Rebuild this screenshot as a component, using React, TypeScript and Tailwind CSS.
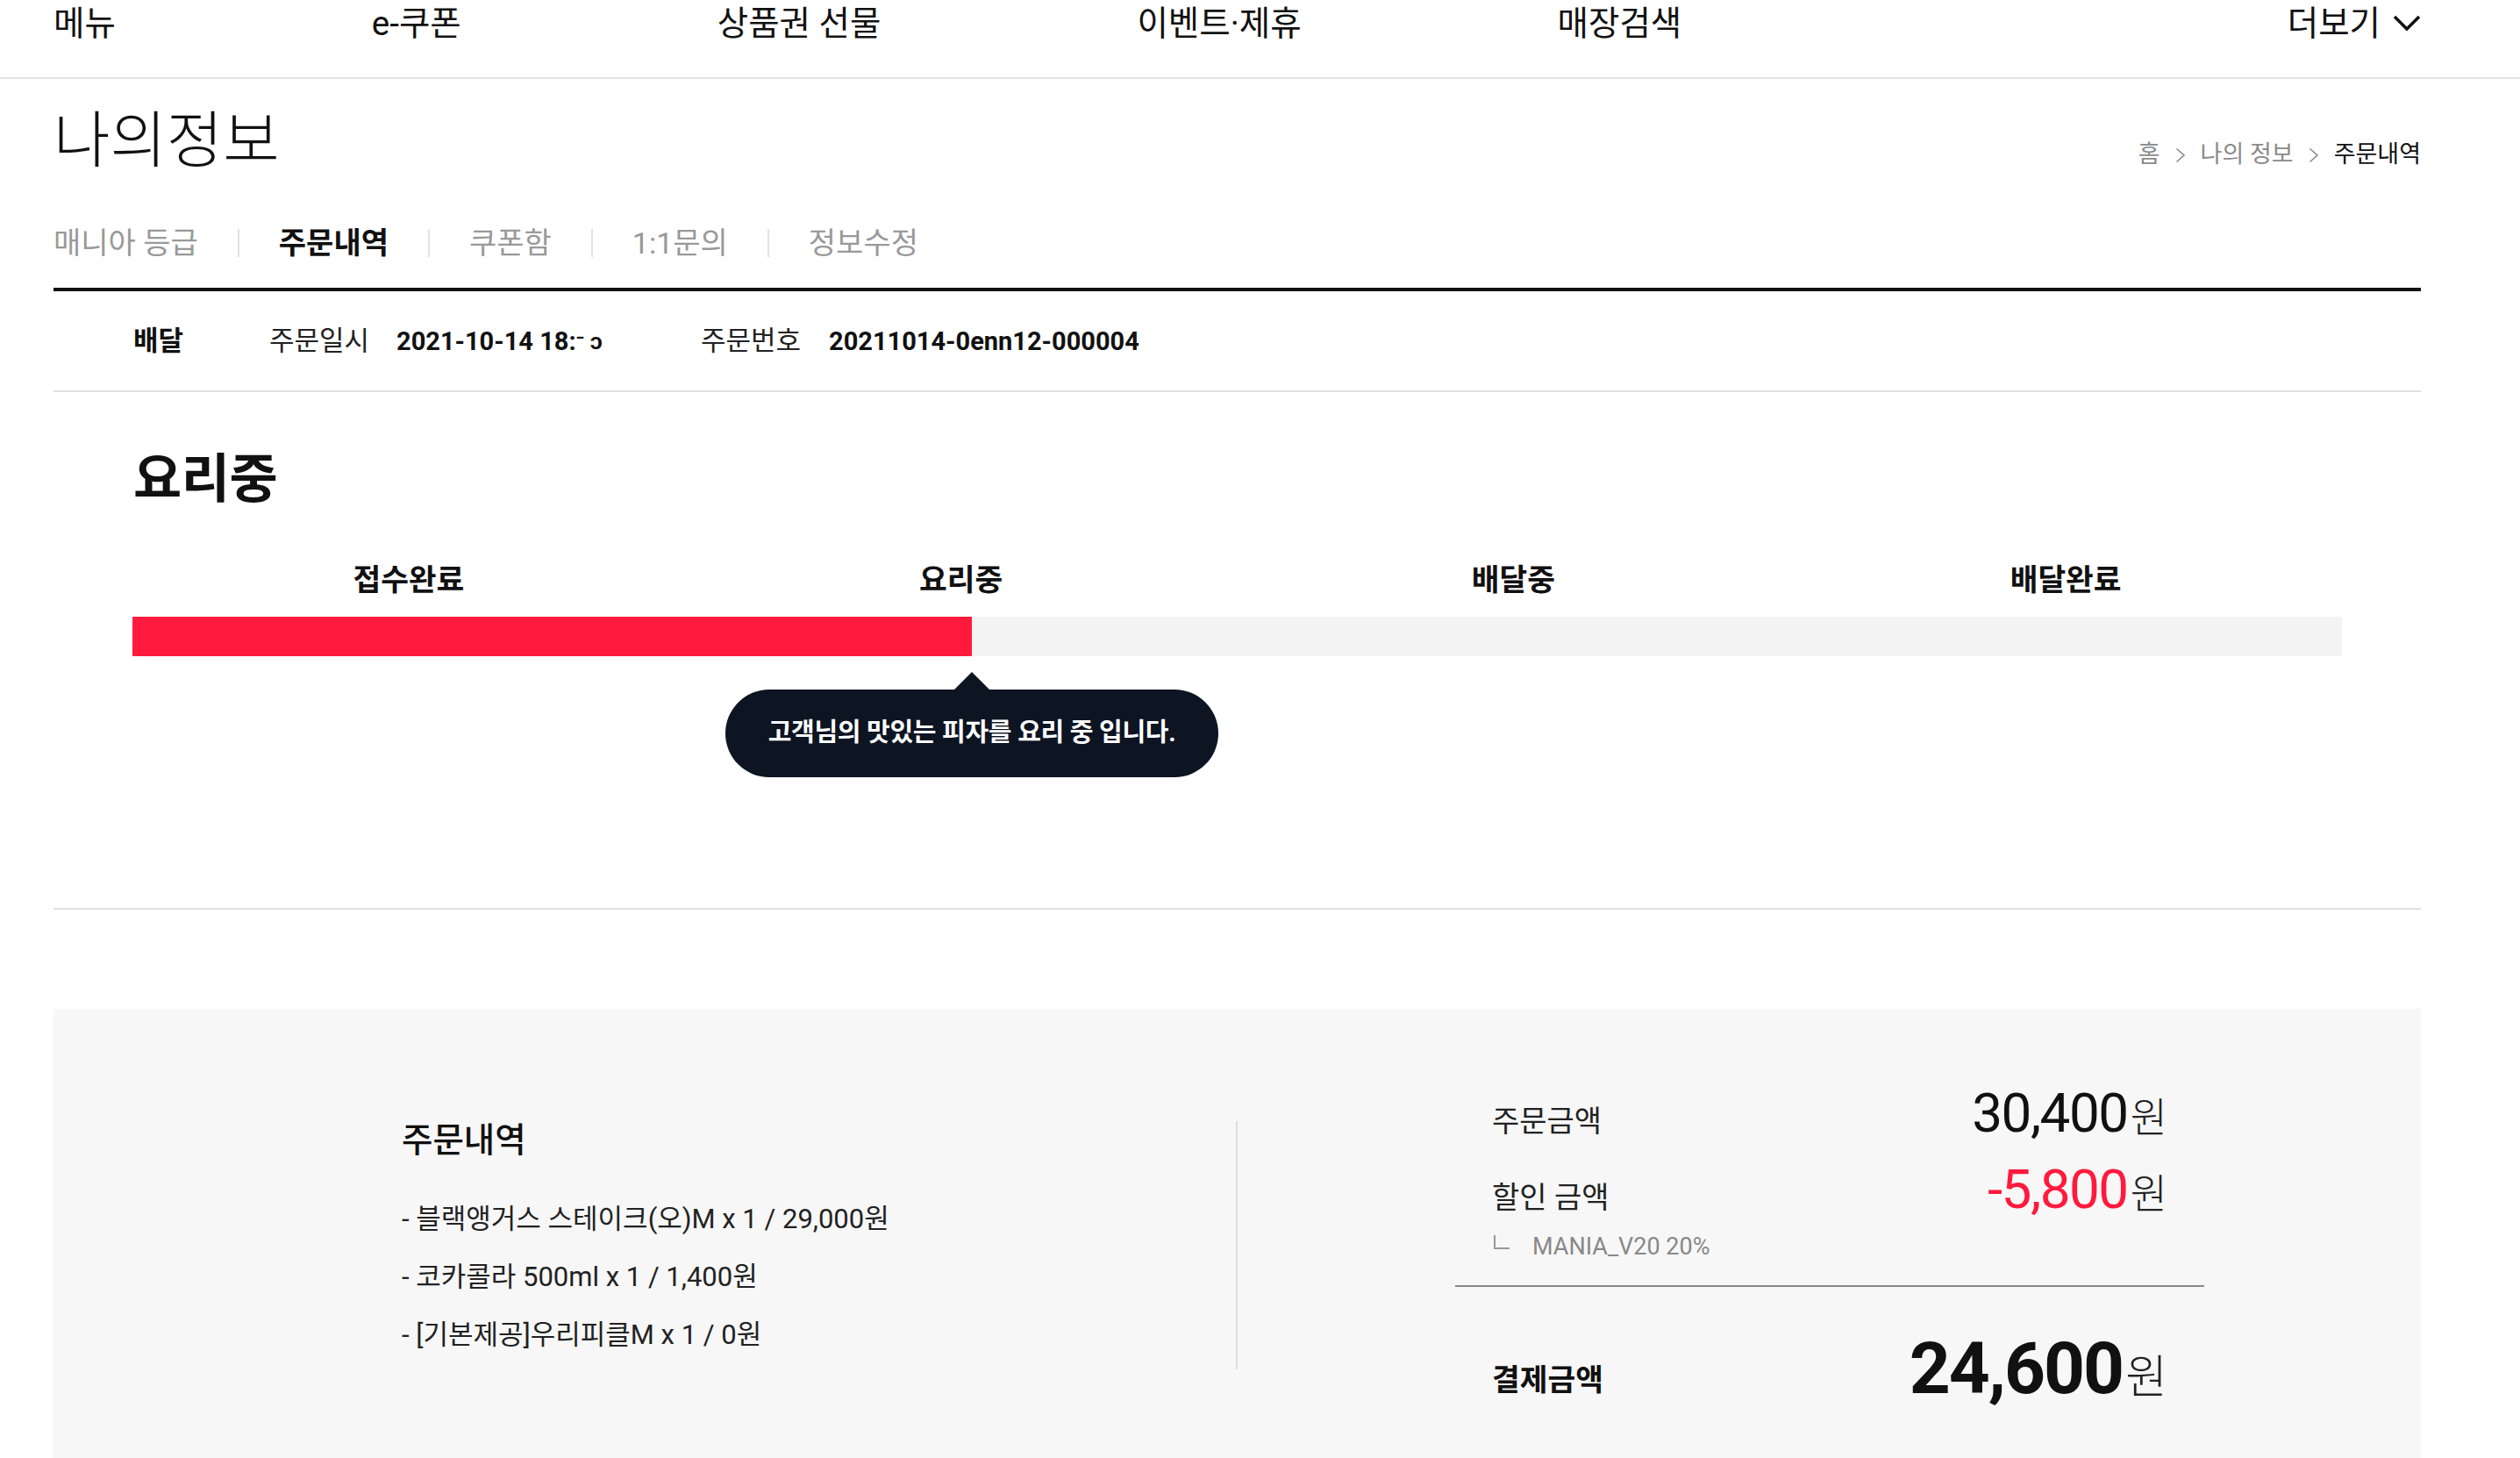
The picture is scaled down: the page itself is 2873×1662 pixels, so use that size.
import React from "react";

const NavChevron = () => (
  <svg width="32" height="20" viewBox="0 0 32 20" className="ml-[14px]">
    <polyline points="2,2 16,16 30,2" fill="none" stroke="#111" strokeWidth="3.5" />
  </svg>
);

const CrumbArrow = () => (
  <svg width="12" height="18" viewBox="0 0 12 18" className="mx-[17px] self-center translate-y-[1px]">
    <polyline points="1.5,1.5 10,9 1.5,16.5" fill="none" stroke="#8a8a8a" strokeWidth="1.6" />
  </svg>
);

const Sep = () => <span className="mx-[45px] h-[32px] w-[2px] bg-[#e2e2e2]" />;

function PriceRow({
  label,
  value,
  red,
  className,
}: {
  label: string;
  value: string;
  red?: boolean;
  className?: string;
}) {
  return (
    <div className={"flex items-baseline justify-between " + (className ?? "")}>
      <span className="text-[34px] leading-[32px] text-[#222]">{label}</span>
      <span className="text-[62px] leading-[62px] text-[#111]">
        <span className={"tracking-[-1.5px] " + (red ? "text-[#ff1a3d]" : "text-[#111]")}>{value}</span>
        <span className="ml-[3px] text-[46px] leading-none font-light text-[#222]">원</span>
      </span>
    </div>
  );
}

export default function App() {
  return (
    <div className="min-h-[1662px] bg-white text-[#111] font-[family-name:Roboto,'Noto_Sans_CJK_KR','Noto_Sans_CJK_JP',sans-serif]">
      {/* top navigation */}
      <header className="border-b-2 border-[#e4e4e4]">
        <nav className="ml-[61px] flex h-[88px] w-[2699px] items-start justify-between pt-[3px] text-[38.5px] leading-[48px] text-[#111]">
          <ul className="flex gap-[292px]">
            <li>메뉴</li>
            <li>e-쿠폰</li>
            <li>상품권 선물</li>
            <li>이벤트·제휴</li>
            <li>매장검색</li>
          </ul>
          <div className="flex items-center">
            <span>더보기</span>
            <NavChevron />
          </div>
        </nav>
      </header>

      <main className="ml-[61px] w-[2699px]">
        {/* title + breadcrumb */}
        <div className="mt-[31px] flex items-baseline justify-between">
          <h1 className="text-[70px] leading-[80px] font-light text-[#111]">나의정보</h1>
          <div className="flex items-baseline text-[27px] leading-[36px] text-[#8a8a8a]">
            <span>홈</span>
            <CrumbArrow />
            <span>나의 정보</span>
            <CrumbArrow />
            <span className="text-[#111]">주문내역</span>
          </div>
        </div>

        {/* tabs */}
        <div className="mt-[54px] flex h-[44px] items-center text-[34px] leading-[44px] text-[#999]">
          <span>매니아 등급</span>
          <Sep />
          <span className="font-bold text-[#111]">주문내역</span>
          <Sep />
          <span>쿠폰함</span>
          <Sep />
          <span>1:1문의</span>
          <Sep />
          <span>정보수정</span>
        </div>

        {/* order info row */}
        <div className="mt-[29px] border-t-4 border-[#111]">
          <div className="flex h-[115px] items-center border-b-2 border-[#e0e0e0] pl-[91px] text-[31px] leading-[40px] text-[#222]">
            <span className="w-[155px] font-bold text-[#111]">배달</span>
            <span className="w-[145px]">주문일시</span>
            <span className="w-[347px] text-[29px] font-bold text-[#111]">
              2021-10-14 18:<span className="text-[26px] align-top">⁻ ͻ</span>
            </span>
            <span className="w-[146px]">주문번호</span>
            <span className="text-[29px] font-bold text-[#111]">20211014-0enn12-000004</span>
          </div>
        </div>

        {/* status */}
        <section className="border-b-2 border-[#e0e0e0] pb-[287px]">
          <h2 className="mt-[64px] pl-[91px] text-[60px] leading-[72px] font-bold tracking-[-0.5px] text-[#111]">요리중</h2>
          <div className="mt-[56px] grid grid-cols-4 px-[90px] text-center text-[34.5px] leading-[44px] font-bold text-[#111]">
            <span>접수완료</span>
            <span>요리중</span>
            <span>배달중</span>
            <span>배달완료</span>
          </div>
          <div className="relative mx-[90px] mt-[20px] h-[45px] bg-[#f3f3f3]">
            <div className="h-full w-[957px] bg-[#ff1a3d]" />
            <div className="absolute left-[957px] top-[63px] flex -translate-x-1/2 flex-col items-center">
              <div className="h-0 w-0 border-x-[20px] border-b-[20px] border-x-transparent border-b-[#0d1422]" />
              <div className="flex h-[100px] w-[562px] items-center justify-center rounded-full bg-[#0d1422] text-[29px] font-bold tracking-[-0.3px] text-white">
                고객님의 맛있는 피자를 요리 중 입니다.
              </div>
            </div>
          </div>
        </section>

        {/* summary panel */}
        <div className="mt-[113px] flex items-center bg-[#f7f7f7] pb-[62px] pt-[88px]">
          <div className="w-[1350px] border-r-2 border-[#e0e0e0] pb-[6px] pl-[397px]">
            <h3 className="-mt-[4px] text-[38.5px] leading-[52px] font-medium text-[#111]">주문내역</h3>
            <ul className="mt-[31px] text-[31px] leading-[66px] text-[#222]">
              <li>- 블랙앵거스 스테이크(오)M x 1 / 29,000원</li>
              <li>- 코카콜라 500ml x 1 / 1,400원</li>
              <li>- [기본제공]우리피클M x 1 / 0원</li>
            </ul>
          </div>
          <div className="flex-1 pl-[248px] pr-[247px]">
            <div className="px-[42px]">
              <PriceRow label="주문금액" value="30,400" />
              <PriceRow label="할인 금액" value="-5,800" red className="mt-[25px]" />
              <div className="mt-[16px] flex items-center text-[27px] leading-[36px] text-[#888]">
                <span className="-mt-[10px] ml-[2px] inline-block h-[16px] w-[18px] border-b-2 border-l-2 border-[#999]" />
                <span className="ml-[26px]">MANIA_V20 20%</span>
              </div>
            </div>
            <div className="mt-[26px] border-t-2 border-[#8a8a8a]" />
            <div className="mt-[52px] flex items-baseline justify-between px-[42px]">
              <span className="-translate-y-[3px] text-[34.5px] leading-[32px] font-bold text-[#111]">결제금액</span>
              <span className="text-[82px] leading-[82px] font-bold text-[#111]">
                <span className="tracking-[-2px]">24,600</span>
                <span className="ml-[3px] text-[52px] leading-none font-light text-[#222]">원</span>
              </span>
            </div>
          </div>
        </div>
      </main>
    </div>
  );
}
